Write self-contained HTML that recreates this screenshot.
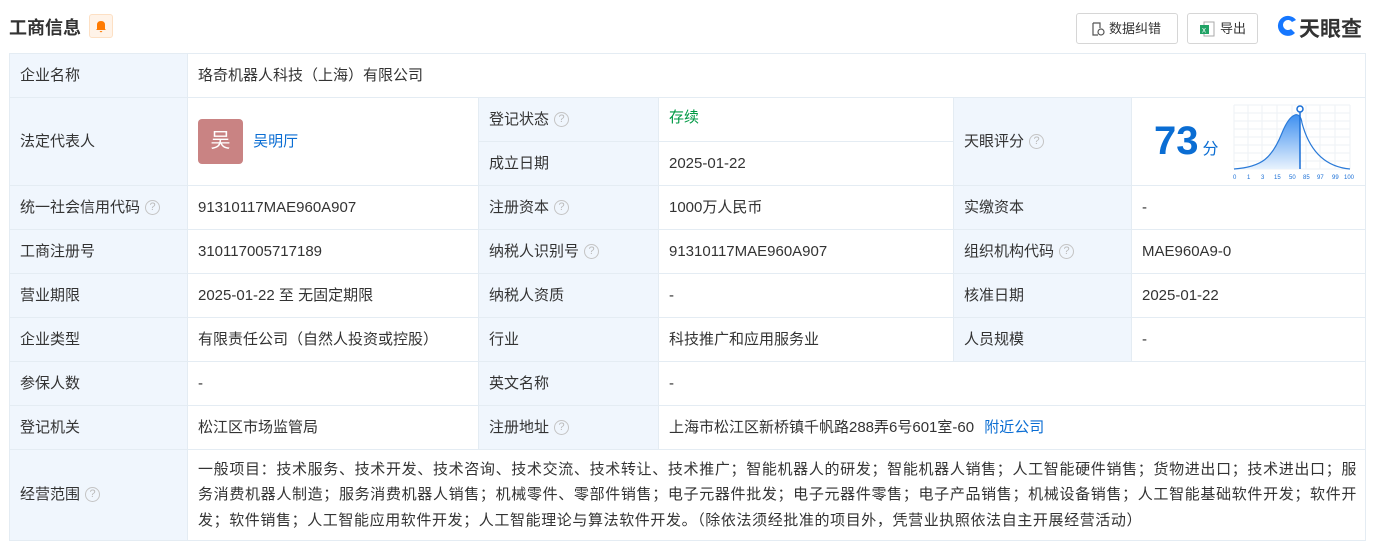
<!DOCTYPE html>
<html><head><meta charset="utf-8"><style>
*{box-sizing:border-box;margin:0;padding:0}
body{width:1376px;height:548px;background:#fff;font-family:"Liberation Sans","Noto Sans CJK SC",sans-serif;color:#333;font-size:15px;position:relative;overflow:hidden}
.title{position:absolute;left:9px;top:14px;font-size:18px;font-weight:bold;color:#333}
.bell{position:absolute;left:89px;top:14px;width:24px;height:24px;background:#fff3e8;border:1px solid #fde0c4;border-radius:3px}
.btn{position:absolute;top:13px;height:31px;border:1px solid #d6d6d6;border-radius:3px;font-size:13px;line-height:29px;color:#333;padding-left:32px}
table{position:absolute;left:9px;top:53px;border-collapse:collapse;table-layout:fixed;width:1356px}
td{border:1px solid #e4ecf3;padding:0 10px;height:44px;vertical-align:middle;white-space:nowrap;line-height:20px}
td.l{background:#f0f6fd}
.q{display:inline-block;width:15px;height:15px;border:1px solid #c4c4c4;border-radius:50%;font-size:11px;line-height:13px;text-align:center;color:#bbb;vertical-align:top;margin-top:2px;margin-left:5px}
a{color:#0a6dd3;text-decoration:none}
</style></head><body>
<div class="title">工商信息</div>
<div class="bell"><svg width="22" height="22" viewBox="0 0 22 22"><path d="M7 14 L7 10 Q7 6 11 6 Q15 6 15 10 L15 14 L16 15 L6 15 Z M9.5 16 L12.5 16 L11 17.5 Z" fill="#ff7a00"/></svg></div>
<div class="btn" style="left:1076px;width:102px"><svg style="position:absolute;left:14px;top:8px" width="14" height="14" viewBox="0 0 14 14"><path d="M2 1h7v5M2 1v12h5" fill="none" stroke="#555" stroke-width="1.2"/><circle cx="10" cy="10" r="3" fill="none" stroke="#555" stroke-width="1.2"/></svg>数据纠错</div>
<div class="btn" style="left:1187px;width:71px"><svg style="position:absolute;left:12px;top:7px" width="15" height="16" viewBox="0 0 15 16"><rect x="4" y="1" width="10" height="14" fill="#fff" stroke="#aaa"/><rect x="0" y="4" width="9" height="9" fill="#21a366"/><text x="2" y="11.5" font-size="8" fill="#fff" font-family="Liberation Sans">x</text></svg>导出</div>
<svg style="position:absolute;left:1275px;top:14px" width="24" height="24" viewBox="0 0 24 24"><path d="M21 6 A10 10 0 1 0 20 19 L16 15 A5 5 0 1 1 17 8 Z" fill="#1677ff"/></svg>
<div style="position:absolute;left:1299px;top:13px;font-size:21px;font-weight:bold;color:#333">天眼查</div>
<table>
<colgroup><col style="width:178px"><col style="width:291px"><col style="width:180px"><col style="width:295px"><col style="width:178px"><col style="width:234px"></colgroup>
<tr><td class="l">企业名称</td><td colspan="5">珞奇机器人科技（上海）有限公司</td></tr>
<tr><td class="l" rowspan="2">法定代表人</td><td rowspan="2"><span style="display:inline-block;width:45px;height:45px;background:#c98383;border-radius:4px;color:#fff;font-size:20px;text-align:center;line-height:45px;vertical-align:middle">吴</span> <a style="margin-left:6px;vertical-align:middle">吴明厅</a></td><td class="l">登记状态<span class="q">?</span></td><td style="color:#009944;vertical-align:top;padding-top:10px">存续</td><td class="l" rowspan="2">天眼评分<span class="q">?</span></td><td rowspan="2" style="position:relative;padding:0">
<div style="position:absolute;left:22px;top:20px;font-size:40px;line-height:46px;font-weight:bold;color:#0a6dd3">73<span style="font-size:16px;font-weight:normal;margin-left:4px">分</span></div>
<svg style="position:absolute;left:100px;top:5px" width="122" height="78" viewBox="0 0 122 78"><defs><linearGradient id="g" x1="0" y1="0" x2="0" y2="1"><stop offset="0" stop-color="#3d8ff0"/><stop offset="1" stop-color="#e8f2fd"/></linearGradient></defs>
<g stroke="#eef2f6" stroke-width="1"><path d="M2 2H118M2 10H118M2 18H118M2 26H118M2 34H118M2 42H118M2 50H118M2 58H118M2 66H118M2 2V66M16 2V66M30 2V66M45 2V66M60 2V66M74 2V66M88 2V66M103 2V66M118 2V66"/></g>
<path d="M2 66 C30 64 40 55 50 30 C58 10 68 6 68 18 L68 66 Z" fill="url(#g)"/>
<path d="M2 66 C30 64 40 55 50 30 C58 10 68 6 70 20 C78 50 95 64 118 66" fill="none" stroke="#2a7ad8" stroke-width="1.2"/>
<path d="M68 8V66" stroke="#1a6fd6" stroke-width="1.5"/><circle cx="68" cy="6" r="3" fill="#fff" stroke="#1a6fd6" stroke-width="1.5"/>
<text y="76" font-size="6" fill="#1a6fd6" font-family="Liberation Sans"><tspan x="1">0</tspan><tspan x="15">1</tspan><tspan x="29">3</tspan><tspan x="42">15</tspan><tspan x="57">50</tspan><tspan x="71">85</tspan><tspan x="85">97</tspan><tspan x="100">99</tspan><tspan x="112">100</tspan></text></svg></td></tr>
<tr><td class="l">成立日期</td><td>2025-01-22</td></tr>
<tr><td class="l">统一社会信用代码<span class="q">?</span></td><td>91310117MAE960A907</td><td class="l">注册资本<span class="q">?</span></td><td>1000万人民币</td><td class="l">实缴资本</td><td>-</td></tr>
<tr><td class="l">工商注册号</td><td>310117005717189</td><td class="l">纳税人识别号<span class="q">?</span></td><td>91310117MAE960A907</td><td class="l">组织机构代码<span class="q">?</span></td><td>MAE960A9-0</td></tr>
<tr><td class="l">营业期限</td><td>2025-01-22 至 无固定期限</td><td class="l">纳税人资质</td><td>-</td><td class="l">核准日期</td><td>2025-01-22</td></tr>
<tr><td class="l">企业类型</td><td>有限责任公司（自然人投资或控股）</td><td class="l">行业</td><td>科技推广和应用服务业</td><td class="l">人员规模</td><td>-</td></tr>
<tr><td class="l">参保人数</td><td>-</td><td class="l">英文名称</td><td colspan="3">-</td></tr>
<tr><td class="l">登记机关</td><td>松江区市场监管局</td><td class="l">注册地址<span class="q">?</span></td><td colspan="3">上海市松江区新桥镇千帆路288弄6号601室-60 <a style="margin-left:6px">附近公司</a></td></tr>
<tr><td class="l" style="height:91px">经营范围<span class="q">?</span></td><td colspan="5" style="white-space:normal;line-height:25.5px;text-align:justify;padding:4px 8px 4px 10px;letter-spacing:0.6px">一般项目：技术服务、技术开发、技术咨询、技术交流、技术转让、技术推广；智能机器人的研发；智能机器人销售；人工智能硬件销售；货物进出口；技术进出口；服务消费机器人制造；服务消费机器人销售；机械零件、零部件销售；电子元器件批发；电子元器件零售；电子产品销售；机械设备销售；人工智能基础软件开发；软件开发；软件销售；人工智能应用软件开发；人工智能理论与算法软件开发。（除依法须经批准的项目外，凭营业执照依法自主开展经营活动）</td></tr>
</table>
</body></html>
